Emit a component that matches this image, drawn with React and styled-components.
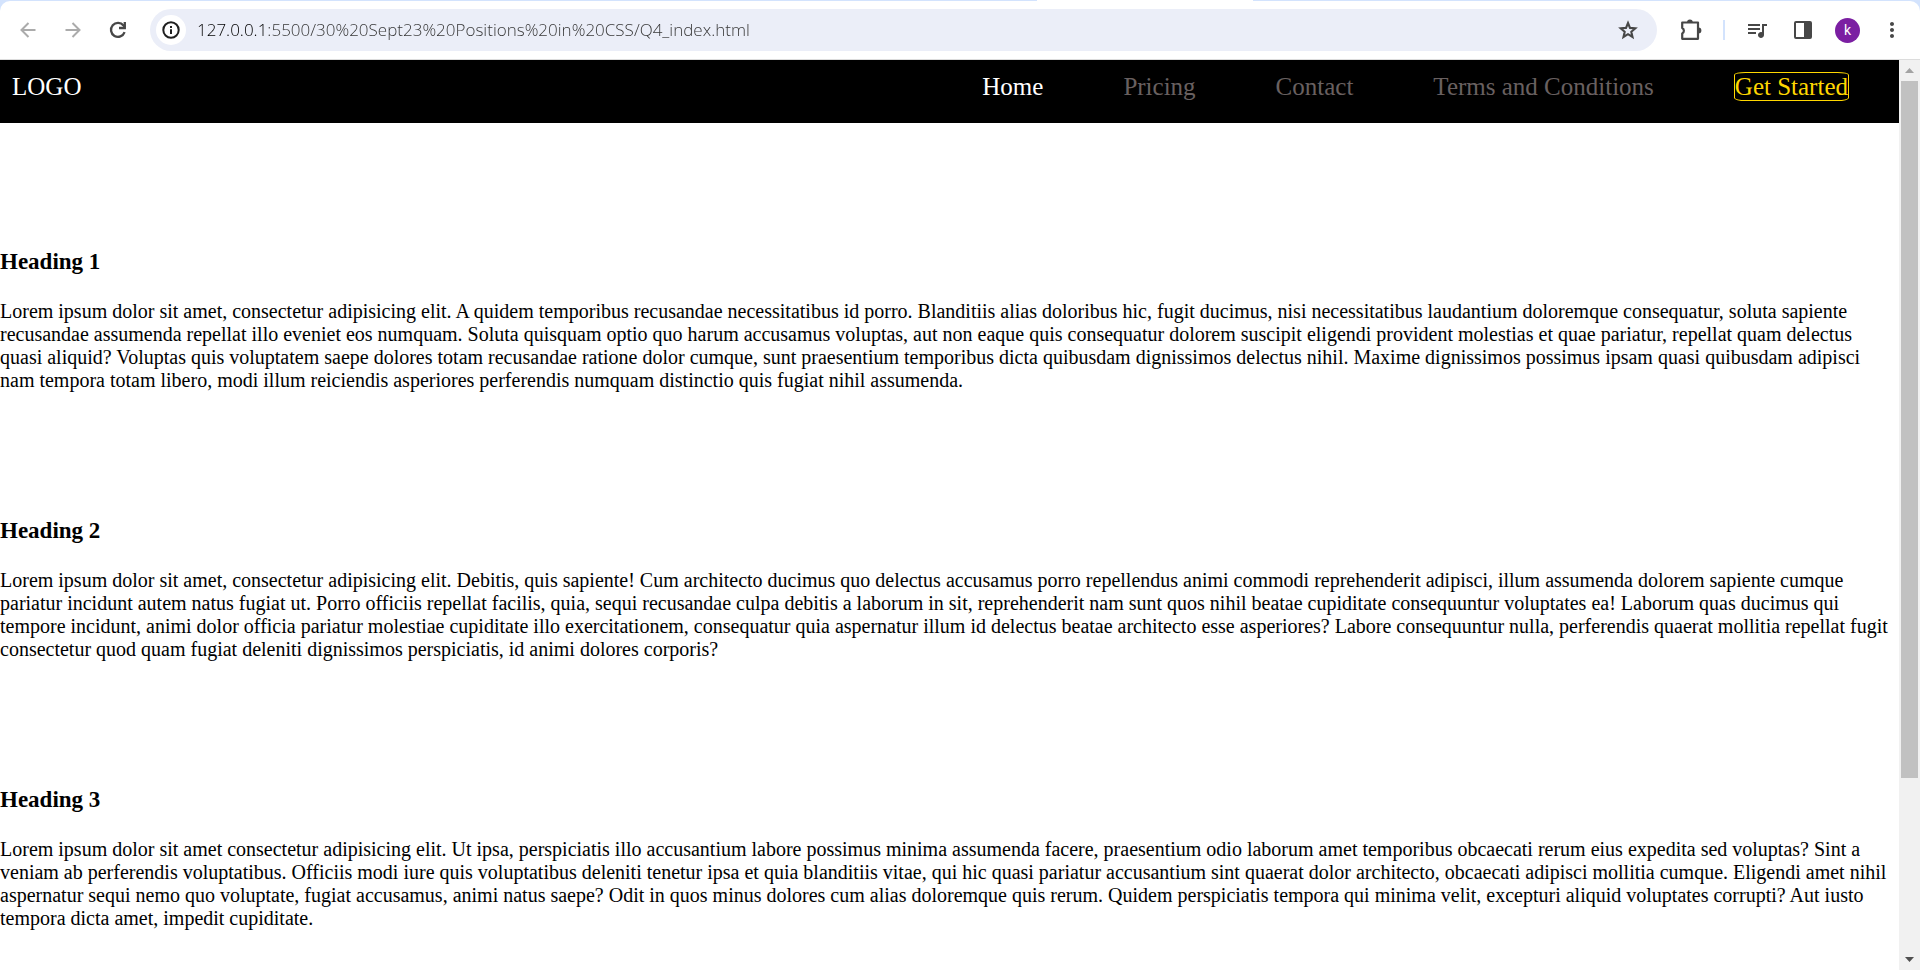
import React from "react";
import styled, { createGlobalStyle } from "styled-components";
import { MdQueueMusic, MdMoreVert } from "react-icons/md";

const GlobalStyle = createGlobalStyle`
  * { box-sizing: border-box; }
  body { margin: 0; background: #fff; }
`;

const Window = styled.div`
  display: flex;
  flex-direction: column;
  height: 100vh;
  overflow: hidden;
`;

const TabStrip = styled.div`
  flex: none;
  display: flex;
  height: 1px;
  background: #d3e3fd;
`;

const ActiveTab = styled.div`
  width: 216px;
  margin-left: 54%;
  background: #fff;
`;

const ToolbarFrame = styled.div`
  flex: none;
  background: #d3e3fd;
`;

const Toolbar = styled.div`
  display: flex;
  align-items: center;
  height: 59px;
  padding: 0 14px;
  border-bottom: 1px solid #dcdcdc;
  border-radius: 10px 10px 0 0;
  background: #fff;
`;

const ToolButton = styled.button`
  flex: none;
  display: grid;
  place-items: center;
  width: 28px;
  height: 28px;
  padding: 0;
  border: 0;
  background: none;
  color: ${(p) => (p.$muted ? "#ababab" : "#474747")};
`;

const NavigationButtons = styled.div`
  display: flex;
  gap: 17px;
  margin-right: 18px;
`;

const AddressBar = styled.form`
  flex: 1;
  display: flex;
  align-items: center;
  height: 42px;
  padding: 0 15px 0 6px;
  border-radius: 21px;
  background: #ebeef8;
`;

const SiteInfoButton = styled(ToolButton)`
  width: 30px;
  height: 30px;
  border-radius: 50%;
  background: #fff;
  color: #1f1f1f;
`;

const AddressInput = styled.input`
  flex: 1;
  min-width: 0;
  height: 30px;
  margin-left: 11px;
  padding: 0;
  border: 0;
  outline: 0;
  font: 300 17px/30px "Open Sans", sans-serif;
  color: transparent;
  background: linear-gradient(90deg, #000 67px, #333 67px) text;
`;

const Extras = styled.div`
  display: flex;
  align-items: center;
  margin-left: 20px;
`;

const Divider = styled.span`
  width: 2px;
  height: 20px;
  margin: 0 18px;
  background: #d3e3fd;
`;

const ExtraButtons = styled.div`
  display: flex;
  align-items: center;
  gap: 18px;
`;

const Avatar = styled.button`
  width: 25px;
  height: 25px;
  padding: 0;
  border: 0;
  border-radius: 50%;
  background: #7b1fa2;
  color: #fff;
  font: 14px/25px Roboto, sans-serif;
`;

const Viewport = styled.div`
  flex: 1;
  min-height: 0;
  display: flex;
`;

const Page = styled.div`
  flex: 1;
  overflow-y: auto;
  scrollbar-width: none;
  font-family: "Liberation Serif", serif;
  color: #000;
`;

const SiteHeader = styled.header`
  position: sticky;
  top: 0;
  display: flex;
  justify-content: space-between;
  align-items: flex-start;
  height: 63px;
  padding: 12px 50px 0 12px;
  background: #000;
  font-size: 25px;
  line-height: 29px;
`;

const Logo = styled.div`
  color: #fff;
`;

const SiteNav = styled.nav`
  display: flex;
  gap: 80px;
`;

const NavLink = styled.a`
  text-decoration: none;
  color: ${(p) => (p.$active ? "#fff" : "#696060")};
`;

const StartLink = styled(NavLink)`
  border: 1px solid #ffd700;
  border-radius: 10%;
  line-height: 27px;
  color: #ffd700;
`;

const Article = styled.main`
  padding-bottom: 125px;
`;

const Section = styled.section`
  padding-top: 125px;
`;

const Heading = styled.h3`
  margin: 0 0 25px;
  font-size: 23px;
  line-height: 27px;
`;

const Paragraph = styled.p`
  margin: 0;
  font-size: 20px;
  line-height: 23px;
`;

const Scrollbar = styled.div`
  flex: none;
  display: flex;
  flex-direction: column;
  width: 21px;
  background: #f1f1f1;
`;

const ScrollArrow = styled.div`
  flex: none;
  display: grid;
  place-items: center;
  height: 21px;
  color: ${(p) => (p.$muted ? "#a3a3a3" : "#505050")};
`;

const ScrollTrack = styled.div`
  flex: 1;
  padding: 0 2px;
`;

const ScrollThumb = styled.div`
  height: 80.3%;
  background: #c1c1c1;
`;

const BackIcon = () => (
  <svg width="24" height="24" viewBox="0 0 24 24" fill="none" stroke="currentColor" strokeWidth="2">
    <path d="M19.500 12H6M12.500 5L5.500 12l7 7" />
  </svg>
);

const ForwardIcon = () => (
  <svg width="24" height="24" viewBox="0 0 24 24" fill="none" stroke="currentColor" strokeWidth="2">
    <path d="M4.500 12H18M11.500 5l7 7-7 7" />
  </svg>
);

const ReloadIcon = () => (
  <svg width="24" height="24" viewBox="0 0 24 24" fill="none" stroke="currentColor" strokeWidth="2.300">
    <path d="M18.600 14.200A7 7 0 1 1 17.500 7.500L19 9.200" />
    <path d="M18.800 4v6H13" />
  </svg>
);

const InfoIcon = () => (
  <svg width="20" height="20" viewBox="0 0 20 20" fill="none" stroke="currentColor" strokeWidth="2">
    <circle cx="10" cy="10" r="7.700" />
    <path d="M10 9.200V14M10 6v2" />
  </svg>
);

const StarIcon = () => (
  <svg width="24" height="24" viewBox="0 0 24 24" fill="none" stroke="currentColor" strokeWidth="2.100">
    <path d="M12 5L14 9.900L19.300 10.300L15.300 13.800L16.500 19L12 16.200L7.500 19L8.700 13.800L4.700 10.300L10 9.900z" />
  </svg>
);

const PuzzleIcon = () => (
  <svg width="24" height="24" viewBox="0 0 24 24">
    <path
      d="M3.200 4.500h15.800v16.300H3.200v-5.300a3 3 0 0 0 0-5.400z"
      fill="none"
      stroke="currentColor"
      strokeWidth="2.200"
      strokeLinejoin="round"
    />
    <path d="M8 4.300a2.900 2.900 0 0 1 5.800 0zM19.500 9.500a2.900 2.900 0 0 1 0 5.800z" fill="currentColor" />
  </svg>
);

const SidePanelIcon = () => (
  <svg width="24" height="24" viewBox="0 0 24 24">
    <rect x="4" y="4" width="16" height="16" rx="1" fill="none" stroke="currentColor" strokeWidth="2" />
    <path d="M13 4h7v16h-7z" fill="currentColor" />
  </svg>
);

const ArrowUp = () => (
  <svg width="9" height="5" viewBox="0 0 9 5"><path d="M0 5L4.500 0L9 5z" fill="currentColor" /></svg>
);

const ArrowDown = () => (
  <svg width="9" height="5" viewBox="0 0 9 5"><path d="M0 0L4.500 5L9 0z" fill="currentColor" /></svg>
);

const links = ["Home", "Pricing", "Contact", "Terms and Conditions"];

const sections = [
  {
    title: "Heading 1",
    text: "Lorem ipsum dolor sit amet, consectetur adipisicing elit. A quidem temporibus recusandae necessitatibus id porro. Blanditiis alias doloribus hic, fugit ducimus, nisi necessitatibus laudantium doloremque consequatur, soluta sapiente recusandae assumenda repellat illo eveniet eos numquam. Soluta quisquam optio quo harum accusamus voluptas, aut non eaque quis consequatur dolorem suscipit eligendi provident molestias et quae pariatur, repellat quam delectus quasi aliquid? Voluptas quis voluptatem saepe dolores totam recusandae ratione dolor cumque, sunt praesentium temporibus dicta quibusdam dignissimos delectus nihil. Maxime dignissimos possimus ipsam quasi quibusdam adipisci nam tempora totam libero, modi illum reiciendis asperiores perferendis numquam distinctio quis fugiat nihil assumenda.",
  },
  {
    title: "Heading 2",
    text: "Lorem ipsum dolor sit amet, consectetur adipisicing elit. Debitis, quis sapiente! Cum architecto ducimus quo delectus accusamus porro repellendus animi commodi reprehenderit adipisci, illum assumenda dolorem sapiente cumque pariatur incidunt autem natus fugiat ut. Porro officiis repellat facilis, quia, sequi recusandae culpa debitis a laborum in sit, reprehenderit nam sunt quos nihil beatae cupiditate consequuntur voluptates ea! Laborum quas ducimus qui tempore incidunt, animi dolor officia pariatur molestiae cupiditate illo exercitationem, consequatur quia aspernatur illum id delectus beatae architecto esse asperiores? Labore consequuntur nulla, perferendis quaerat mollitia repellat fugit consectetur quod quam fugiat deleniti dignissimos perspiciatis, id animi dolores corporis?",
  },
  {
    title: "Heading 3",
    text: "Lorem ipsum dolor sit amet consectetur adipisicing elit. Ut ipsa, perspiciatis illo accusantium labore possimus minima assumenda facere, praesentium odio laborum amet temporibus obcaecati rerum eius expedita sed voluptas? Sint a veniam ab perferendis voluptatibus. Officiis modi iure quis voluptatibus deleniti tenetur ipsa et quia blanditiis vitae, qui hic quasi pariatur accusantium sint quaerat dolor architecto, obcaecati adipisci mollitia cumque. Eligendi amet nihil aspernatur sequi nemo quo voluptate, fugiat accusamus, animi natus saepe? Odit in quos minus dolores cum alias doloremque quis rerum. Quidem perspiciatis tempora qui minima velit, excepturi aliquid voluptates corrupti? Aut iusto tempora dicta amet, impedit cupiditate.",
  },
];

export default function App() {
  return (
    <Window>
      <GlobalStyle />
      <TabStrip>
        <ActiveTab />
      </TabStrip>
      <ToolbarFrame>
        <Toolbar>
          <NavigationButtons>
            <ToolButton $muted aria-label="Back"><BackIcon /></ToolButton>
            <ToolButton $muted aria-label="Forward"><ForwardIcon /></ToolButton>
            <ToolButton aria-label="Reload"><ReloadIcon /></ToolButton>
          </NavigationButtons>
          <AddressBar onSubmit={(e) => e.preventDefault()}>
            <SiteInfoButton type="button" aria-label="Site information"><InfoIcon /></SiteInfoButton>
            <AddressInput
              aria-label="Address"
              spellCheck={false}
              defaultValue="127.0.0.1:5500/30%20Sept23%20Positions%20in%20CSS/Q4_index.html"
            />
            <ToolButton type="button" aria-label="Bookmark"><StarIcon /></ToolButton>
          </AddressBar>
          <Extras>
            <ToolButton aria-label="Extensions"><PuzzleIcon /></ToolButton>
            <Divider />
            <ExtraButtons>
              <ToolButton aria-label="Media controls"><MdQueueMusic size={24} /></ToolButton>
              <ToolButton aria-label="Side panel"><SidePanelIcon /></ToolButton>
              <Avatar aria-label="Profile">k</Avatar>
              <ToolButton aria-label="Menu"><MdMoreVert size={24} /></ToolButton>
            </ExtraButtons>
          </Extras>
        </Toolbar>
      </ToolbarFrame>
      <Viewport>
        <Page>
          <SiteHeader>
            <Logo>LOGO</Logo>
            <SiteNav>
              {links.map((label, i) => (
                <NavLink key={label} href="#" $active={i === 0}>{label}</NavLink>
              ))}
              <StartLink href="#">Get Started</StartLink>
            </SiteNav>
          </SiteHeader>
          <Article>
            {sections.map((s) => (
              <Section key={s.title}>
                <Heading>{s.title}</Heading>
                <Paragraph>{s.text}</Paragraph>
              </Section>
            ))}
          </Article>
        </Page>
        <Scrollbar>
          <ScrollArrow $muted><ArrowUp /></ScrollArrow>
          <ScrollTrack><ScrollThumb /></ScrollTrack>
          <ScrollArrow><ArrowDown /></ScrollArrow>
        </Scrollbar>
      </Viewport>
    </Window>
  );
}
